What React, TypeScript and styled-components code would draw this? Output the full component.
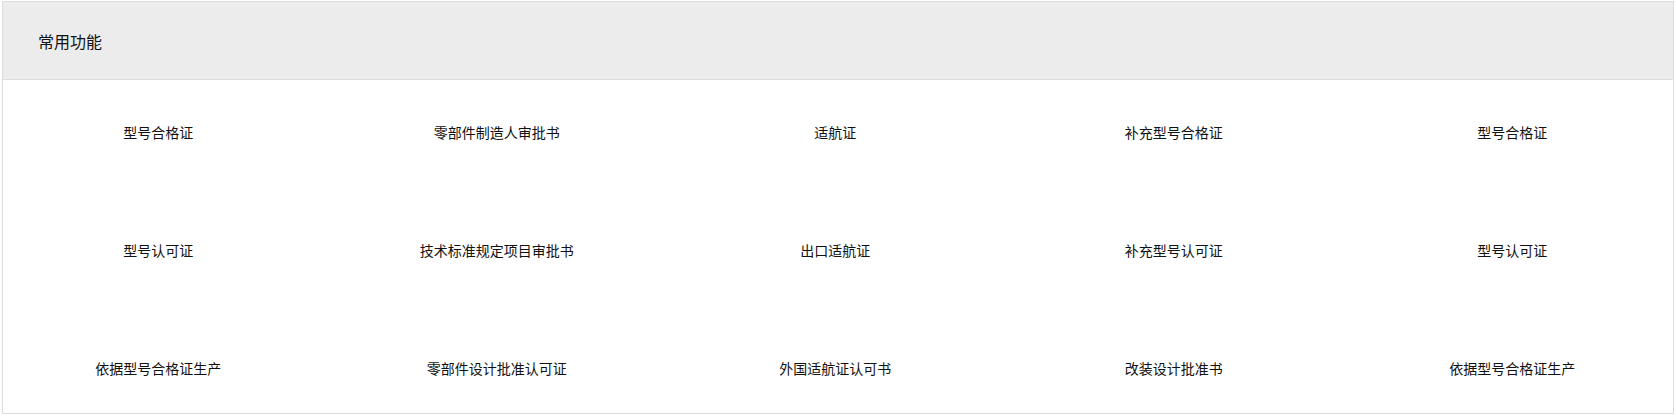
import React from "react";
import styled, { createGlobalStyle } from "styled-components";

const GlobalStyle = createGlobalStyle`
  html, body {
    margin: 0;
    padding: 0;
    background: #ffffff;
  }
  body {
    font-family: "Noto Sans CJK SC", "Noto Sans", sans-serif;
    color: #333333;
  }
`;

const Page = styled.div`
  padding: 1px 2px 4px 2px;
  width: 1676px;
  box-sizing: border-box;
`;

const Panel = styled.section`
  border: 1px solid #dddddd;
  background: #ffffff;
  overflow: hidden;
`;

const PanelHeader = styled.header`
  background: #ececec;
  border-bottom: 1px solid #dddddd;
  height: 77px;
  box-sizing: content-box;
  display: flex;
  align-items: flex-start;
  padding-left: 35px;
`;

const Title = styled.h3`
  margin: 28px 0 0 0;
  font-size: 16px;
  font-weight: 400;
  line-height: 22px;
  color: #111111;
`;

const Body = styled.div`
  padding: 42px 0 34px 0;
`;

const Grid = styled.ul`
  list-style: none;
  margin: 0 0 0 -14px;
  padding: 0;
  display: grid;
  grid-template-columns: repeat(5, 338.5px);
  row-gap: 97px;
`;

const Item = styled.li`
  text-align: center;
  font-size: 14px;
  line-height: 21px;
  color: #111111;
  cursor: pointer;
  white-space: nowrap;
`;

const items = [
  "型号合格证",
  "零部件制造人审批书",
  "适航证",
  "补充型号合格证",
  "型号合格证",
  "型号认可证",
  "技术标准规定项目审批书",
  "出口适航证",
  "补充型号认可证",
  "型号认可证",
  "依据型号合格证生产",
  "零部件设计批准认可证",
  "外国适航证认可书",
  "改装设计批准书",
  "依据型号合格证生产",
];

export default function App() {
  return (
    <>
      <GlobalStyle />
      <Page>
        <Panel>
          <PanelHeader>
            <Title>常用功能</Title>
          </PanelHeader>
          <Body>
            <Grid>
              {items.map((t, i) => (
                <Item key={i}>{t}</Item>
              ))}
            </Grid>
          </Body>
        </Panel>
      </Page>
    </>
  );
}
